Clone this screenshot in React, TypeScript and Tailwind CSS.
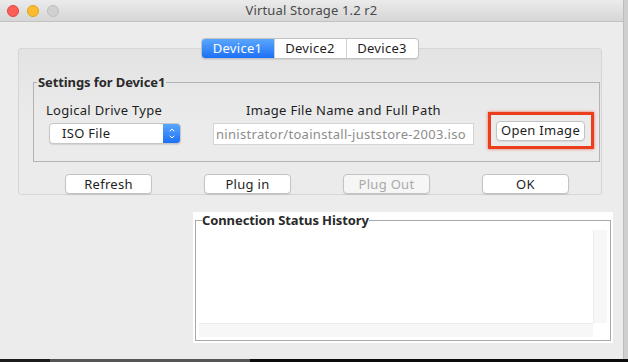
import { ChevronDown, ChevronUp } from "lucide-react";

const font = { fontFamily: '"Noto Sans", "Open Sans", sans-serif' };

function MacButton({ label, disabled, className }: { label: string; disabled?: boolean; className?: string }) {
  return (
    <button
      className={`h-[20px] rounded-[4px] border border-[#c3c3c3] text-[13px] tracking-[0.3px] leading-none shadow-[0_1px_1px_rgba(0,0,0,0.08)] ${
        disabled ? "text-[#a9a9a9] bg-[#f6f6f6]" : "text-[#1e1e1e] bg-white"
      } ${className ?? ""}`}
    >
      {label}
    </button>
  );
}

export default function App() {
  const tabs = ["Device1", "Device2", "Device3"];

  return (
    <div className="w-[628px] h-[362px] bg-[#cfcfcf] overflow-hidden" style={font}>
      <div className="w-[624px] h-[359px] bg-[#ececec] border-r border-[#bdbdbd] flex flex-col">
        {/* title bar */}
        <div className="h-[22px] flex items-center relative bg-gradient-to-b from-[#ebebeb] to-[#d6d6d6] border-b border-[#c2c2c2]">
          <div className="flex gap-[8px] pl-[7px]">
            <span className="w-[12px] h-[12px] rounded-full bg-[#fc5f57] border border-[#e0443e]" />
            <span className="w-[12px] h-[12px] rounded-full bg-[#fdbc2e] border border-[#dea123]" />
            <span className="w-[12px] h-[12px] rounded-full bg-[#d0d0d0] border border-[#bdbdbd]" />
          </div>
          <div className="absolute inset-0 flex items-center justify-center text-[13px] tracking-[0.15px] text-[#4a4a4a]">
            Virtual Storage 1.2 r2
          </div>
        </div>

        {/* tabs */}
        <div className="mt-[16px] flex justify-center relative z-10 pr-[4px]">
          <div className="flex h-[21px] rounded-[4px] border border-[#c2c2c2] bg-white shadow-[0_1px_1px_rgba(0,0,0,0.08)] overflow-hidden text-[13px] tracking-[0.3px]">
            {tabs.map((t, i) => (
              <div
                key={t}
                className={`flex items-center justify-center w-[72px] ${
                  i === 0
                    ? "bg-gradient-to-b from-[#5aa6fc] to-[#1b6ff5] text-white"
                    : "text-[#1e1e1e] border-l border-[#d0d0d0]"
                }`}
              >
                {t}
              </div>
            ))}
          </div>
        </div>

        {/* tab panel */}
        <div className="mt-[-11px] ml-[18px] mr-[21px] h-[147px] border border-[#d6d6d6] rounded-[3px] bg-gradient-to-b from-[#e3e3e3] via-[#ebebeb] to-[#ebebeb] pt-[26px]">
          <fieldset className="ml-[14px] mr-[1px] h-[87px] border border-[#b3b3b3] pl-[12px]">
            <legend className="ml-[-9px] px-[1px] text-[13px] font-bold tracking-[-0.1px] text-[#2a2a2a] leading-[14px]">
              Settings for Device1
            </legend>
            <div className="flex mt-[13px] tracking-[0.3px]">
              <div className="w-[140px] flex flex-col">
                <span className="text-[13px] text-[#1e1e1e] leading-[16px]">Logical Drive Type</span>
                <div className="mt-[5px] ml-[3px] w-[132px] h-[21px] flex rounded-[4px] border border-[#c6c6c6] bg-white shadow-[0_1px_1px_rgba(0,0,0,0.1)] overflow-hidden">
                  <span className="flex-1 pl-[12px] text-[13px] text-[#1e1e1e] leading-[19px]">ISO File</span>
                  <span className="w-[17px] flex flex-col items-center justify-center bg-gradient-to-b from-[#5aa6fc] to-[#1b6ff5] text-white">
                    <ChevronUp size={8} strokeWidth={3} className="mb-[-1px]" />
                    <ChevronDown size={8} strokeWidth={3} />
                  </span>
                </div>
              </div>
              <div className="ml-[27px] w-[261px] flex flex-col">
                <span className="text-[13px] text-[#1e1e1e] leading-[16px] text-center">Image File Name and Full Path</span>
                <div className="mt-[5px] h-[22px] border border-[#d4d4d4] bg-white text-[13px] text-[#8d8d8d] leading-[20px] whitespace-nowrap pl-[2px]">
                  ninistrator/toainstall-juststore-2003.iso
                </div>
              </div>
              <div className="ml-[14px] mt-[10px] w-[106px] h-[37px] flex items-center pl-[5px] border-[3px] border-[#ea3e1c] shadow-[0_0_3px_rgba(234,62,28,0.7)]">
                <MacButton label="Open Image" className="w-[89px]" />
              </div>
            </div>
          </fieldset>
          <div className="flex gap-[52px] pl-[46px] mt-[12px]">
            <MacButton label="Refresh" className="w-[87px]" />
            <MacButton label="Plug in" className="w-[87px]" />
            <MacButton label="Plug Out" disabled className="w-[87px]" />
            <MacButton label="OK" className="w-[87px]" />
          </div>
        </div>

        {/* connection status */}
        <div className="mt-[17px] ml-[193px] w-[420px] h-[131px] bg-white pt-[1px] px-[2px] pb-[2px]">
          <fieldset className="h-full border border-[#a9a9a9] px-[3px] pb-[3px]">
            <legend className="ml-[3px] text-[13px] font-bold tracking-[-0.1px] text-[#2a2a2a] leading-[14px]">
              Connection Status History
            </legend>
            <div className="flex flex-col h-[107px] mt-[3px]">
              <div className="flex flex-1">
                <div className="flex-1 bg-white" />
                <div className="w-[14px] bg-[#f7f7f7] border-l border-[#ececec]" />
              </div>
              <div className="flex h-[14px]">
                <div className="flex-1 bg-[#f7f7f7] border-t border-[#ececec]" />
                <div className="w-[14px] bg-white" />
              </div>
            </div>
          </fieldset>
        </div>
      </div>
      <div className="h-[3px] flex">
        <div className="w-[50px] bg-[#1c1c1c]" />
        <div className="w-[200px] bg-[#555]" />
        <div className="flex-1 bg-[#0c0c0c]" />
      </div>
    </div>
  );
}
